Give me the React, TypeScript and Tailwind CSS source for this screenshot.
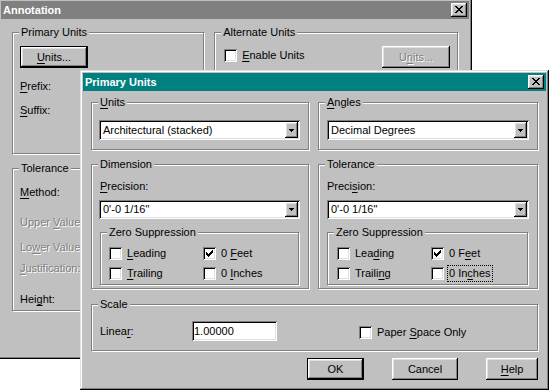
import React from "react";

const raised =
  "shadow-[inset_-1px_-1px_0_#000,inset_1px_1px_0_#fff,inset_-2px_-2px_0_#808080,inset_2px_2px_0_#dfdfdf]";
const sunken =
  "shadow-[inset_1px_1px_0_#808080,inset_-1px_-1px_0_#fff,inset_2px_2px_0_#000,inset_-2px_-2px_0_#dfdfdf]";
const frame =
  "shadow-[inset_-1px_-1px_0_#000,inset_1px_1px_0_#dfdfdf,inset_-2px_-2px_0_#808080,inset_2px_2px_0_#fff]";
const etched = "border border-[#808080] shadow-[inset_1px_1px_0_#fff,1px_1px_0_#fff]";
const disabled = "text-[#808080] [text-shadow:1px_1px_0_#fff]";

function M({ t, u }: { t: string; u?: number }) {
  if (u === undefined) return <>{t}</>;
  return (
    <>
      {t.slice(0, u)}
      <span className="underline underline-offset-[2px] decoration-1">{t[u]}</span>
      {t.slice(u + 1)}
    </>
  );
}

function Group({
  label,
  className,
  children,
}: {
  label: React.ReactNode;
  className?: string;
  children?: React.ReactNode;
}) {
  return (
    <div className={`relative flex flex-col ${etched} ${className ?? ""}`}>
      <span className="absolute left-[6px] top-[-7px] px-[2px] bg-[#c0c0c0] leading-[13px] whitespace-nowrap">
        {label}
      </span>
      {children}
    </div>
  );
}

function CheckMark() {
  return (
    <svg width="7" height="7" shapeRendering="crispEdges">
      {[2, 3, 4, 3, 2, 1, 0].map((y, x) => (
        <rect key={x} x={x} y={y} width="1" height="3" fill="#000" />
      ))}
    </svg>
  );
}

function Check({ checked, label, focus }: { checked?: boolean; label: React.ReactNode; focus?: boolean }) {
  return (
    <div className="flex items-center gap-[5px] leading-[13px] whitespace-nowrap">
      <div className={`w-[13px] h-[13px] bg-white ${sunken} flex items-center justify-center shrink-0`}>
        {checked && <CheckMark />}
      </div>
      <span className={focus ? "outline-1 outline-dotted outline-black outline-offset-[1px]" : ""}>{label}</span>
    </div>
  );
}

function Arrow() {
  return (
    <svg width="5" height="3" shapeRendering="crispEdges">
      <rect x="0" y="0" width="5" height="1" fill="#000" />
      <rect x="1" y="1" width="3" height="1" fill="#000" />
      <rect x="2" y="2" width="1" height="1" fill="#000" />
    </svg>
  );
}

function Combo({ value, className }: { value: string; className?: string }) {
  return (
    <div className={`flex bg-white p-[2px] ${sunken} ${className ?? ""}`}>
      <div className="flex-1 flex items-center pl-[2px] whitespace-nowrap overflow-hidden">{value}</div>
      <div className={`w-[13px] bg-[#c0c0c0] ${raised} flex items-center justify-center`}>
        <Arrow />
      </div>
    </div>
  );
}

function Btn({
  children,
  def,
  className,
}: {
  children: React.ReactNode;
  def?: boolean;
  className?: string;
}) {
  return (
    <div className={`bg-[#c0c0c0] ${def ? "border border-black" : ""} ${className ?? ""}`}>
      <div className={`w-full h-full flex items-center justify-center whitespace-nowrap ${raised}`}>{children}</div>
    </div>
  );
}

function CloseX() {
  return (
    <div className={`w-[16px] h-[14px] bg-[#c0c0c0] ${raised} flex items-center justify-center pb-[1px] pr-[1px]`}>
      <svg width="8" height="7" shapeRendering="crispEdges">
        <rect x="0" y="0" width="2" height="1" fill="#000" />
        <rect x="6" y="0" width="2" height="1" fill="#000" />
        <rect x="1" y="1" width="2" height="1" fill="#000" />
        <rect x="5" y="1" width="2" height="1" fill="#000" />
        <rect x="2" y="2" width="4" height="1" fill="#000" />
        <rect x="3" y="3" width="2" height="1" fill="#000" />
        <rect x="2" y="4" width="4" height="1" fill="#000" />
        <rect x="1" y="5" width="2" height="1" fill="#000" />
        <rect x="5" y="5" width="2" height="1" fill="#000" />
        <rect x="0" y="6" width="2" height="1" fill="#000" />
        <rect x="6" y="6" width="2" height="1" fill="#000" />
      </svg>
    </div>
  );
}

function TitleBar({ title, active }: { title: string; active?: boolean }) {
  return (
    <div
      className={`h-[18px] shrink-0 flex items-center justify-between pl-[2px] pr-[2px] font-bold text-white ${
        active ? "bg-[#008080]" : "bg-[#808080]"
      }`}
    >
      <span className="leading-[13px]">{title}</span>
      <CloseX />
    </div>
  );
}

function Annotation() {
  return (
    <div className={`absolute left-[-2px] top-[-2px] w-[474px] h-[361px] bg-[#c0c0c0] p-[3px] flex flex-col ${frame}`}>
      <TitleBar title="Annotation" />
      <div className="px-[11px] flex flex-col">
        <div className="mt-[13px] flex gap-[10px]">
          <Group label="Primary Units" className="w-[193px] h-[122px]">
            <Btn def className="mt-[13px] ml-[7px] w-[68px] h-[22px]">
              <M t="Units..." u={0} />
            </Btn>
            <div className="mt-[12px] ml-[7px] leading-[13px]">
              <M t="Prefix:" u={0} />
            </div>
            <div className="mt-[11px] ml-[7px] leading-[13px]">
              <M t="Suffix:" u={0} />
            </div>
          </Group>
          <Group label="Alternate Units" className="w-[245px] h-[122px]">
            <div className="mt-[13px] pl-[9px] pr-[7px] flex justify-between items-start">
              <div className="mt-[3px]">
                <Check label={<M t="Enable Units" u={0} />} />
              </div>
              <Btn className="w-[68px] h-[22px]">
                <span className={disabled}>
                  <M t="Units..." u={1} />
                </span>
              </Btn>
            </div>
          </Group>
        </div>
        <div className="mt-[14px] flex gap-[10px]">
          <Group label="Tolerance" className="w-[193px] h-[143px]">
            <div className="mt-[17px] ml-[7px] leading-[13px]">
              <M t="Method:" u={0} />
            </div>
            <div className={`mt-[17px] ml-[7px] leading-[13px] ${disabled}`}>
              <M t="Upper Value:" u={6} />
            </div>
            <div className={`mt-[12px] ml-[7px] leading-[13px] ${disabled}`}>
              <M t="Lower Value:" u={2} />
            </div>
            <div className={`mt-[8px] ml-[7px] leading-[13px] ${disabled}`}>
              <M t="Justification:" u={0} />
            </div>
            <div className="mt-[18px] ml-[7px] leading-[13px]">
              <M t="Height:" u={3} />
            </div>
          </Group>
        </div>
      </div>
    </div>
  );
}

function ZeroSupp({ className, inset, right }: { className: string; inset: string; right?: boolean }) {
  return (
    <Group label="Zero Suppression" className={className}>
      <div className={`mt-[14px] ${inset} grid grid-cols-[94px_auto] gap-y-[7px]`}>
        <Check label={right ? <M t="Leading" u={3} /> : <M t="Leading" u={0} />} />
        <Check checked label={right ? <M t="0 Feet" u={3} /> : <M t="0 Feet" u={2} />} />
        <Check label={right ? <M t="Trailing" u={6} /> : <M t="Trailing" u={0} />} />
        <Check focus={right} label={right ? <M t="0 Inches" u={4} /> : <M t="0 Inches" u={2} />} />
      </div>
    </Group>
  );
}

function PrimaryUnits() {
  return (
    <div className={`absolute left-[80px] top-[70px] w-[469px] h-[320px] bg-[#c0c0c0] p-[3px] flex flex-col ${frame}`}>
      <TitleBar title="Primary Units" active />
      <div className="px-[8px] flex flex-col">
        <div className="mt-[11px] flex gap-[9px]">
          <Group label={<M t="Units" u={0} />} className="w-[218px] h-[48px]">
            <Combo value="Architectural (stacked)" className="mt-[17px] ml-[7px] w-[201px] h-[20px]" />
          </Group>
          <Group label={<M t="Angles" u={0} />} className="w-[220px] h-[48px]">
            <Combo value="Decimal Degrees" className="mt-[17px] ml-[8px] w-[202px] h-[20px]" />
          </Group>
        </div>
        <div className="mt-[14px] flex gap-[9px]">
          <Group label="Dimension" className="w-[218px] h-[125px]">
            <div className="mt-[15px] ml-[8px] leading-[13px]">
              <M t="Precision:" u={0} />
            </div>
            <Combo value={"0'-0 1/16\""} className="mt-[7px] ml-[7px] w-[201px] h-[19px]" />
            <ZeroSupp className="mt-[13px] ml-[8px] w-[199px] h-[53px]" inset="ml-[8px]" />
          </Group>
          <Group label="Tolerance" className="w-[220px] h-[125px]">
            <div className="mt-[15px] ml-[8px] leading-[13px]">
              <M t="Precision:" u={5} />
            </div>
            <Combo value={"0'-0 1/16\""} className="mt-[7px] ml-[8px] w-[202px] h-[19px]" />
            <ZeroSupp className="mt-[13px] ml-[8px] w-[201px] h-[53px]" inset="ml-[9px]" right />
          </Group>
        </div>
        <Group label="Scale" className="mt-[15px] w-[447px] h-[47px]">
          <div className="mt-[16px] ml-[8px] h-[20px] flex items-center">
            <span className="w-[92px] leading-[13px]">
              <M t="Linear:" u={5} />
            </span>
            <div className={`w-[85px] h-[20px] bg-white ${sunken} pl-[2px] flex items-center`}>1.00000</div>
            <div className="ml-[82px] mt-[2px]">
              <Check label={<M t="Paper Space Only" u={6} />} />
            </div>
          </div>
        </Group>
        <div className="mt-[7px] flex justify-end gap-[28px]">
          <Btn def className="w-[57px] h-[22px]">
            OK
          </Btn>
          <Btn className="w-[66px] h-[22px]">Cancel</Btn>
          <Btn className="w-[52px] h-[22px]">
            <M t="Help" u={0} />
          </Btn>
        </div>
      </div>
    </div>
  );
}

export default function App() {
  return (
    <div className="relative w-[549px] h-[390px] overflow-hidden bg-white text-black text-[11px] leading-[13px] font-['Liberation_Sans',Arial,sans-serif]">
      <Annotation />
      <PrimaryUnits />
    </div>
  );
}
